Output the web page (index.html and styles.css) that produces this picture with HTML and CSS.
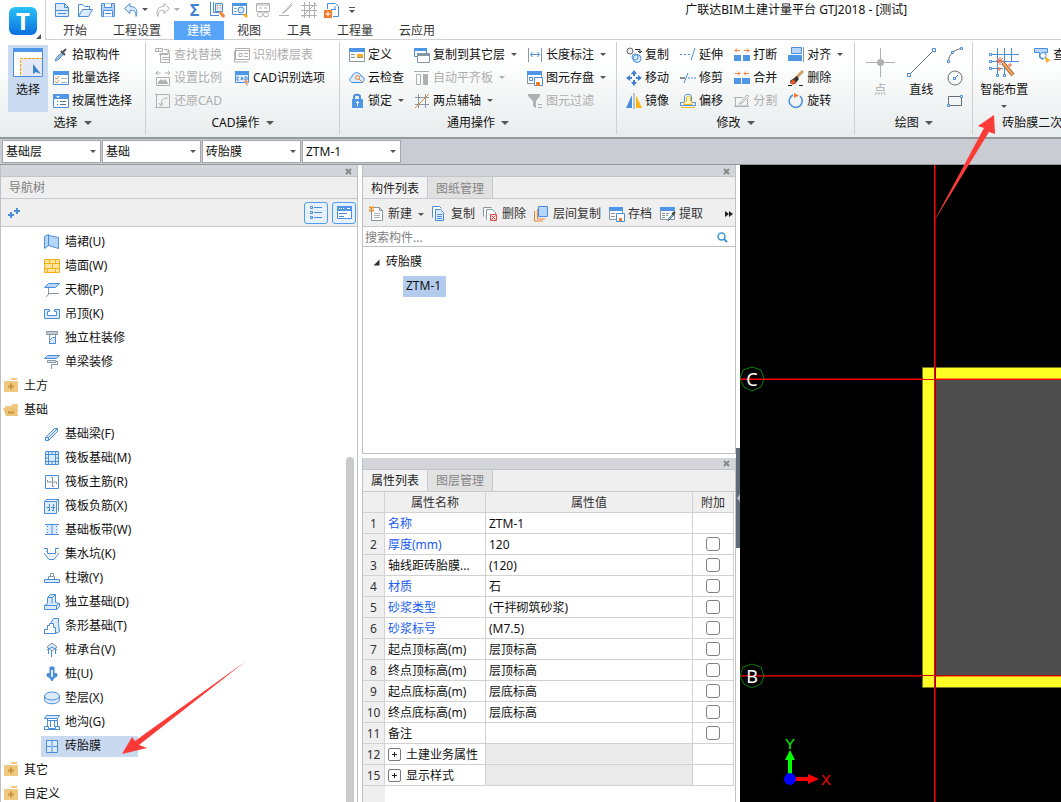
FILE: index.html
```html
<!DOCTYPE html>
<html lang="zh-CN">
<head>
<meta charset="utf-8">
<title>广联达BIM土建计量平台 GTJ2018 - [测试]</title>
<link rel="stylesheet" href="styles.css">
</head>
<body>
<div class="app">
<header class="top">
  <div class="logo">
    <span class="logo-tile">T</span>
    <svg class="logo-corner" width="5" height="5" viewBox="0 0 5 5"><path class="df" d="M5 0v5H0z"/></svg>
  </div>
  <div class="top-body">
    <div class="title-row">
      <div class="quick">
        <button aria-label="新建"><svg class="ic" viewBox="0 0 16 16"><path class="b lt" d="M1.500 1.500h9l4 4v9h-13z"/><path class="b" d="M10.500 1.500v4h4M1.500 8.500h13M4 11.500h8"/></svg></button>
        <button aria-label="打开"><svg class="ic" viewBox="0 0 16 16"><path class="b" d="M1.500 14.500v-12h4l2 2h5v3"/><path class="b lt" d="M1.500 14.500l4-7h10l-4 7z"/></svg></button>
        <button aria-label="保存"><svg class="ic" viewBox="0 0 16 16"><path class="b lt2" d="M1.500 1.500h13v13h-13z"/><path class="b wf" d="M4.500 1.500v4h7v-4M3.500 14.500v-6h9v6M5 11.500h6"/></svg></button>
        <button class="drop" aria-label="撤销"><svg class="ic" viewBox="0 0 16 16"><path class="b lt" d="M7 1.500L1.500 6.500 7 11.500V8.500c4-1 6 1 6 6 2-5 1-10-6-10z"/></svg><span class="caret"></span></button>
        <button class="drop off" aria-label="恢复"><svg class="ic" viewBox="0 0 16 16"><path class="g" d="M9 1.500L14.500 6.500 9 11.500V8.500c-4-1-6 1-6 6-2-5-1-10 6-10z"/></svg><span class="caret"></span></button>
        <button class="sigma" aria-label="汇总计算">Σ</button>
        <button aria-label="查看工程量"><svg class="ic" viewBox="0 0 16 16"><path class="b" d="M1.500 0v13.500M4.500 0v10M1 13.500h9M4 10.500h6"/><path class="b lt" d="M6.500 1.500h7v8h-7z"/><path class="r" d="M8 3.500h1M11 3.500h1M8 6h1M11 6h1"/><path class="o thick" d="M11 10l4 5"/></svg></button>
        <button aria-label="查看计算式"><svg class="ic" viewBox="0 0 16 16"><path class="b" d="M.5 1.500h14v11H.5z"/><path class="bf" d="M0 1h15v3H0z"/><circle class="b lt" cx="9" cy="8" r="3"/><path class="b" d="M2.500 6.500h2M2.500 9.500h2"/><path class="yf" d="M13 11l3 3-2 2-3-3z"/></svg></button>
        <button class="off" aria-label="云检查"><svg class="ic" viewBox="0 0 16 16"><path class="g" d="M1.500 1.500h13v8h-13zM1 3h14M4 6h3M9 6h3"/><circle class="g" cx="5" cy="12.500" r="2.500"/><circle class="g" cx="11" cy="12.500" r="2.500"/></svg></button>
        <button class="off" aria-label="编辑"><svg class="ic" viewBox="0 0 16 16"><path class="g" d="M14 1L7 9l-3 2 3-1 7-7M1 13.500h10"/></svg></button>
        <button class="off" aria-label="网格"><svg class="ic" viewBox="0 0 16 16"><path class="g" d="M3.500 0v16M8.500 0v16M13.500 0v16M0 3.500h16M0 8.500h16M0 13.500h16M1 15L15 1"/></svg></button>
        <button aria-label="导出"><svg class="ic" viewBox="0 0 16 16"><path class="b" d="M3.500 7V1.500h8l3 3v10H9"/><path class="b" d="M7 7.500h5M11 4v3"/><path class="of" d="M0 8h8v8H0z"/><path class="w" d="M1.500 12h5M4 9.500v5"/></svg></button>
        <button class="more" aria-label="自定义快速访问"><svg width="6" height="8" viewBox="0 0 6 8"><path class="df" d="M0 1h6v1H0zM0 4h6L3 7z"/></svg></button>
      </div>
      <h1 class="title">广联达BIM土建计量平台 GTJ2018 - [测试]</h1>
    </div>
    <nav class="tabs">
      <button>开始</button><button>工程设置</button><button class="on">建模</button><button>视图</button><button>工具</button><button>工程量</button><button>云应用</button>
    </nav>
  </div>
</header>

<section class="ribbon">
  <div class="group pick">
    <div class="tools">
      <button class="big picked"><svg width="30" height="30" viewBox="0 0 30 30"><path class="b wf" d="M.5 1.500h29v28H.5z"/><path class="bf" d="M0 1h30v4H0z"/><path d="M8 11h21v18H8z" fill="#e3e8f4"/><path class="dash" d="M7.500 28V11.500H29"/><path d="M20 17v10l3-2 5 2z" fill="#3b82cc"/></svg>选择</button>
      <div class="col">
        <button><svg class="ic" viewBox="0 0 16 16"><path d="M2 14l1-3 6-6 2 2-6 6z" fill="#8fbdf0" stroke="#7896b5"/><path d="M8 4l4 4M10 5l3-3" stroke="#555" stroke-width="2"/></svg>拾取构件</button>
        <button><svg class="ic" viewBox="0 0 16 16"><path class="b wf" d="M.5 1.500h15v13H.5z"/><path class="bf" d="M0 1h16v4H0z"/><path class="o" d="M2 7.500l2 1.500 2-3M2 11.500l2 1.500 2-3"/><path class="g" d="M8 8.500h6M8 12.500h6"/></svg>批量选择</button>
        <button><svg class="ic" viewBox="0 0 16 16"><path class="b wf" d="M.5 1.500h15v13H.5z"/><path class="bf" d="M0 1h16v5H0z"/><path d="M3 3h4L5 5z" fill="#fff"/><path class="d" d="M4 8.500h1M7 8.500h6M4 11.500h1M7 11.500h6"/></svg>按属性选择</button>
      </div>
    </div>
    <button class="label">选择<span class="caret"></span></button>
  </div>

  <div class="group cad">
    <div class="tools">
      <div class="col">
        <button class="off"><svg class="ic" viewBox="0 0 16 16"><path class="g" d="M.5 1.500h7v3h-7zM3.500 1v3M9 2.500h4.500V5M11.500 3.500l2 2 2-2M5.500 6.500h9v9h-9z"/><path class="g" d="M4 7.500h9M7 10.500h7M7 12.500h7"/></svg>查找替换</button>
        <button class="off"><svg class="ic" viewBox="0 0 16 16"><path class="g" d="M.5 3h5M10 3h5M3 1L1 3l2 2M13 1l2 2-2 2M1.500 7.500h13v8h-13z"/><path class="gf" d="M3 14v-2l3-3 2 2 2-2 3 4v1z"/></svg>设置比例</button>
        <button class="off"><svg class="ic" viewBox="0 0 16 16"><path class="g" d="M1.500 1v14M0 1.500h14.500v13H0M4 10l2 3 2-3M6.500 12c-1-5 2-7 6-7"/></svg>还原CAD</button>
      </div>
      <div class="col">
        <button class="off"><svg class="ic" viewBox="0 0 16 16"><path class="g" d="M1.500 1.500h14v11h-14zM.5 4v11h14M1 3.500h14M5 6.500h3v3H5zM10 6.500h4M10 9.500h4"/></svg>识别楼层表</button>
        <button><svg class="ic" viewBox="0 0 16 16"><path class="b lt" d="M1.500 1.500h13v11h-13z"/><path class="bf" d="M1 1h14v4H1z"/><path class="b" d="M5 7H3v3h2M7 10l1-3 1 3M11 7v3h2V7z"/><path d="M10 9l5 3-2 1 1 3-2-1z" fill="#f29a68"/></svg>CAD识别选项</button>
      </div>
    </div>
    <button class="label">CAD操作<span class="caret"></span></button>
  </div>

  <div class="group common">
    <div class="tools">
      <div class="col">
        <button><svg class="ic" viewBox="0 0 16 16"><path class="s wf" d="M.5 1.500h15v13H.5z"/><path class="bf" d="M0 1h16v4H0z"/><path class="s" d="M2 7.500h4M2 10.500h4M8 10.500h6"/><path class="yf" d="M8 7h6v3H8z"/></svg>定义</button>
        <button><svg class="ic" viewBox="0 0 16 16"><path class="b lt" d="M4 12.500C0 12.500 0 7.500 3 7c0-5 8-6 9-1 4 0 4 6 1 6.500z"/><circle class="o" cx="8.500" cy="7.500" r="2"/><path class="o" d="M10 9l3 3"/></svg>云检查</button>
        <button><svg class="ic" viewBox="0 0 16 16"><path d="M5 7V4c0-3 6-3 6 0v3" fill="none" stroke="#4a8edb" stroke-width="2"/><path class="bf" d="M3 6h11v9H3z"/><path class="w" d="M8.500 8v5M7 9.500h3"/></svg>锁定<span class="caret"></span></button>
      </div>
      <div class="col">
        <button><svg class="ic" viewBox="0 0 16 16"><path class="b wf" d="M.5 1.500h12v8H.5z"/><path class="bf" d="M0 1h13v3H0z"/><path class="s wf" d="M3.500 6.500h12v9h-12z"/><path class="sf" d="M3 6h13v3H3z"/></svg>复制到其它层<span class="caret"></span></button>
        <button class="off"><svg class="ic" viewBox="0 0 16 16"><path class="g" d="M0 1.500h15M2.500 4.500h4v10h-4z"/><path class="gf" d="M9 4h5v11H9z"/></svg>自动平齐板<span class="caret"></span></button>
        <button><svg class="ic" viewBox="0 0 16 16"><path class="s" d="M4.500 1v14M11.500 1v14M1 4.500h14M1 11.500h14"/><path class="o" d="M1 15L15 1"/></svg>两点辅轴<span class="caret"></span></button>
      </div>
      <div class="col">
        <button><svg class="ic" viewBox="0 0 16 16"><path class="s" d="M1.500 1v14M14.500 1v14"/><path class="b" d="M4 7.500h8M5.500 5L3.500 7.500l2 2.500M10.500 5l2 2.500-2 2.500"/></svg>长度标注<span class="caret"></span></button>
        <button><svg class="ic" viewBox="0 0 16 16"><path class="s wf" d="M.5 1.500h14v12H.5z"/><path class="bf" d="M0 1h15v4H0z"/><path class="b" d="M2.500 7.500h3v3h-3z"/><path class="b wf" d="M7.500 7.500h8v8h-8z"/><path class="of" d="M9 12h4v4H9z"/></svg>图元存盘<span class="caret"></span></button>
        <button class="off"><svg class="ic" viewBox="0 0 16 16"><path class="gf" d="M1 1h12v2L9 8v7l-3-2V8L1 3zM11 11h4v1h-4zM11 14h4v1h-4z"/></svg>图元过滤</button>
      </div>
    </div>
    <button class="label">通用操作<span class="caret"></span></button>
  </div>

  <div class="group modify">
    <div class="tools">
      <div class="col">
        <button><svg class="ic" viewBox="0 0 16 16"><circle cx="4" cy="4" r="3" fill="#eee" stroke="#666"/><circle class="b lt" cx="11" cy="11.500" r="4"/><circle class="b" cx="9" cy="10" r="3"/><path class="k" d="M9 2.500h5V6M12 4l2 2 2-2"/></svg>复制</button>
        <button><svg class="ic" viewBox="0 0 16 16"><path d="M8 0l3 4H9v2H7V4H5zM8 16l3-4H9v-2H7v2H5zM0 8l4-3v2h2v2H4v2zM16 8l-4-3v2h-2v2h2v2z" fill="#3f80d0"/></svg>移动</button>
        <button><svg class="ic" viewBox="0 0 16 16"><path d="M6 2v13H0z" fill="#4a8edb"/><path d="M10 2v13h6z" fill="#fcb814"/><path class="s" d="M8 0v16"/></svg>镜像</button>
      </div>
      <div class="col">
        <button><svg class="ic" viewBox="0 0 16 16"><path class="b" d="M0 7.500h2M4 7.500h2M8 7.500h2M11 13l4-12"/></svg>延伸</button>
        <button><svg class="ic" viewBox="0 0 16 16"><path class="k" d="M0 8h5"/><path class="b" d="M4 13l4-10M8 8h2M11 8h2M14 8h2"/></svg>修剪</button>
        <button><svg class="ic" viewBox="0 0 16 16"><path class="b" d="M.5 12.500v-3h4v-6c0-3 7-3 7 0v6h4v3z"/><path d="M1 14.500h14M4 11.500h8V9l-1.500-1V4c0-1-4-1-4 0v4L4 9z" fill="#fff3c0" stroke="#f5b81c"/></svg>偏移</button>
      </div>
      <div class="col">
        <button><svg class="ic" viewBox="0 0 16 16"><path class="bf" d="M0 8h7v6H0zM9 8h7v6H9z"/><path class="o" d="M1 3.500h5M3 1.500L1 3.500l2 2M10 3.500h5M13 1.500l2 2-2 2"/></svg>打断</button>
        <button><svg class="ic" viewBox="0 0 16 16"><path class="bf" d="M0 8h7v6H0zM8 8h8v6H8z"/><path class="o" d="M1 3.500h5M4 1.500l2 2-2 2M10 3.500h5M12 1.500l-2 2 2 2"/></svg>合并</button>
        <button class="off"><svg class="ic" viewBox="0 0 16 16"><path class="g" d="M0 4.500h9M1.500 4v9h12V6M0 13.500h15M5 11l8-9 2 1-8 8z"/></svg>分割</button>
      </div>
      <div class="col">
        <button><svg class="ic" viewBox="0 0 16 16"><path class="b lt2" d="M3.500.5h10v6h-10z"/><path class="bf" d="M0 8h14v6H0z"/><path class="s" d="M15.500 0v15"/></svg>对齐<span class="caret"></span></button>
        <button><svg class="ic" viewBox="0 0 16 16"><path d="M15 1L8 8" stroke="#c9a066" stroke-width="3"/><path d="M9 6l2 3-4 5H3l-1-3z" fill="#333"/><path d="M5 9l3 3-3 3-3-2z" fill="#e5562d"/><path class="k" d="M0 15.500h4M11 15.500h4"/></svg>删除</button>
        <button><svg class="ic" viewBox="0 0 16 16"><path d="M12 3a6.500 6.500 0 1 1-7-1" fill="none" stroke="#4a8edb" stroke-width="1.500"/><path class="of" d="M6 0l5 2.500L6 5z"/></svg>旋转</button>
      </div>
    </div>
    <button class="label">修改<span class="caret"></span></button>
  </div>

  <div class="group draw">
    <div class="tools">
      <button class="big off"><svg width="30" height="30" viewBox="0 0 30 30"><path class="g" d="M15.500 1v11M15.500 19v11M1 15.500h11M19 15.500h11"/><circle class="gf" cx="15.500" cy="15.500" r="3.500"/></svg>点</button>
      <button class="big"><svg width="30" height="30" viewBox="0 0 30 30"><path class="d" d="M4 27L26 5"/><path class="b wf" d="M1.500 26.500h3v3h-3zM26.500 1.500h3v3h-3z"/></svg>直线</button>
      <div class="col">
        <button aria-label="弧"><svg class="ic" viewBox="0 0 16 16"><path class="d" d="M1.500 14C2 7 7 3 14 1.500"/><path class="b wf" d="M.5 13.500h2v2h-2zM13.500.5h2v2h-2zM4.500 4.500h2v2h-2z"/></svg></button>
        <button aria-label="圆"><svg class="ic" viewBox="0 0 16 16"><circle class="d" cx="8" cy="8" r="7"/><path class="b" d="M8 8l3-3M6.500 7.500h2v2h-2z"/></svg></button>
        <button aria-label="矩形"><svg class="ic" viewBox="0 0 16 16"><path class="d" d="M1.500 3.500h13v9h-13z"/><path class="b wf" d="M.5 11.500h2v2h-2zM13.500 2.500h2v2h-2z"/></svg></button>
      </div>
    </div>
    <button class="label">绘图<span class="caret"></span></button>
  </div>

  <div class="group smart">
    <div class="tools">
      <button class="big"><svg width="30" height="30" viewBox="0 0 30 30"><path class="b" d="M8.500 1v26M15.500 1v26M22.500 1v14M2 7.500h28M2 14.500h28M2 21.500h12"/><path class="b wf" d="M.5 6.500h2v2h-2zM.5 13.500h2v2h-2zM.5 20.500h2v2h-2zM7.500 27.500h2v2h-2zM14.500 27.500h2v2h-2z"/><path d="M14 16l10 12" stroke="#9a6038" stroke-width="4"/><path d="M14 16l10 12" stroke="#fba95d" stroke-width="2"/><path class="r" d="M11 10v8M7 14h8M8 11l6 6M14 11l-6 6M19 18h4M21 16v4M8 22h4M10 20v4"/></svg>智能布置<span class="caret"></span></button>
      <div class="col">
        <button><svg class="ic" viewBox="0 0 16 16"><path class="b lt2" d="M.5 1.500h13v4h-3l-2 3v4l-3-2v-5h-5z"/><circle class="b wf" cx="9" cy="8.500" r="3"/><path class="yf" d="M12 10l4 3-3 3-2-4z"/></svg>查</button>
      </div>
    </div>
    <button class="label">砖胎膜二次</button>
  </div>
</section>

<div class="pickers">
  <label><select aria-label="楼层"><option>基础层</option></select><span class="caret"></span></label>
  <label><select aria-label="构件类别"><option>基础</option></select><span class="caret"></span></label>
  <label><select aria-label="构件类型"><option>砖胎膜</option></select><span class="caret"></span></label>
  <label><select aria-label="构件名称"><option>ZTM-1</option></select><span class="caret"></span></label>
</div>

<main class="work">
  <aside class="panel nav">
    <div class="bar"><button aria-label="关闭"><svg width="7" height="7" viewBox="0 0 7 7"><path class="x" d="M1 1l5 5M6 1L1 6"/></svg></button></div>
    <h2 class="nav-title">导航树</h2>
    <div class="nav-tools">
      <button aria-label="展开"><svg width="13" height="12" viewBox="0 0 13 12"><path d="M0 8h6M3 5v6M6 4h6M9 1v6" stroke="#4a8edb" stroke-width="2"/></svg></button>
      <span class="grow"></span>
      <button class="view" aria-label="列表"><svg width="14" height="14" viewBox="0 0 14 14"><path class="b" d="M1.500.5h2v2h-2zM1.500 5.500h2v2h-2zM1.500 10.500h2v2h-2zM5 1.500h8M5 6.500h8M5 11.500h8"/></svg></button>
      <button class="view" aria-label="窗口"><svg width="16" height="14" viewBox="0 0 16 14"><path class="b wf" d="M1.500.5h14v12h-14z"/><path class="bf" d="M1 0h15v5H1z"/><path class="w" d="M3 2.500h1M5 2.500h1M7 2.500h1M11 2.500h3"/><path class="b" d="M3 7.500h8M3 10.500h5"/></svg></button>
    </div>
    <div class="nav-body">
    <ul class="tree">
      <li class="leaf"><svg class="ic" viewBox="0 0 16 16"><path class="b lt2" d="M.5 2.500l4-2v11l-4 3zM4.500 1.500l10 2v11l-10-3z"/></svg>墙裙(U)</li>
      <li class="leaf"><svg class="ic" viewBox="0 0 16 16"><path d="M.5 1.500h15v13H.5zM0 5.500h16M0 10.500h16M5.500 1v4M11.500 1v4M8.500 5v5M3.500 10v5M11.500 10v5" fill="#ffe5a0" stroke="#f5b016"/></svg>墙面(W)</li>
      <li class="leaf"><svg class="ic" viewBox="0 0 16 16"><path class="s" d="M4.500 5v8M2 15l3-3.500h10"/><path class="b lt2" d="M.5 5.500l4-4h11l-4 4z"/></svg>天棚(P)</li>
      <li class="leaf"><svg class="ic" viewBox="0 0 16 16"><path class="b lt" d="M.5 3.500h5v2h-2v4h9v-4h-2v-2h5v9H.5z"/></svg>吊顶(K)</li>
      <li class="leaf"><svg class="ic" viewBox="0 0 16 16"><path d="M2.500 1.500h11v3h-11z" fill="#c3c9ce" stroke="#8796a3"/><path class="s" d="M5.500 5v9M11.500 5v9"/><path class="b lt" d="M5.500 13.500v-3l3-3h3v6z"/></svg>独立柱装修</li>
      <li class="leaf"><svg class="ic" viewBox="0 0 16 16"><path class="b lt2" d="M.5 4.500l3-3h12l-3 3z"/><path class="s lt" d="M3.500 6.500h8v2h-8z"/><path class="s" d="M12 7.500h1.500v3H7.500V15"/></svg>单梁装修</li>
      <li class="branch"><svg class="ic" viewBox="0 0 16 16"><path class="ff" d="M8 1l1-1h5v2H8zM1 3h14v11H1z"/><path class="fm" d="M5 8.500h6M8 5.500v6"/></svg>土方</li>
      <li class="branch"><svg class="ic" viewBox="0 0 16 16"><path class="ff" d="M2 4h6l1-2h6v8H2z"/><path d="M0 6h13l2 8H3z" fill="#ecc274"/><path class="fm" d="M5 10.500h6"/></svg>基础</li>
      <li class="leaf"><svg class="ic" viewBox="0 0 16 16"><path class="b lt" d="M1.500 11.500l9-9h3v3l-9 9h-3z"/><path class="b" d="M1.500 11.500h3v3M4.500 11.500l9-9"/></svg>基础梁(F)</li>
      <li class="leaf"><svg class="ic" viewBox="0 0 16 16"><path class="b lt" d="M1.500 1.500h13v13h-13z"/><path class="b" d="M4.500 4.500h7v7h-7zM4.500 1v14M11.500 1v14M1 4.500h14M1 11.500h14M8 1v3M8 12v3M1 8h3M12 8h3"/></svg>筏板基础(M)</li>
      <li class="leaf"><svg class="ic" viewBox="0 0 16 16"><path class="b" d="M1.500 1.500h13v13h-13z"/><path class="s" d="M3.500 6v2h9v2M7 3.500h1.500v9H10"/></svg>筏板主筋(R)</li>
      <li class="leaf"><svg class="ic" viewBox="0 0 16 16"><path class="b lt" d="M.5 3.500h12v12H.5z"/><path class="b" d="M2.500 1.500h12v12M.5 3.500l2-2M12.500 3.500l2-2M5.500 6v7M9.500 6v7M2.500 9.500h3M7 9.500h4M4 12.500h2M8 12.500h2"/></svg>筏板负筋(X)</li>
      <li class="leaf"><svg class="ic" viewBox="0 0 16 16"><path class="lt" d="M2 3h12v10H2z"/><path class="b" d="M1 2.500h14M1 12.500h14M8 3v10"/><path class="b dots" d="M3.500 4v8M12.500 4v8"/></svg>基础板带(W)</li>
      <li class="leaf"><svg class="ic" viewBox="0 0 16 16"><path class="b" d="M0 2.500h3.500v5h8v-5H15M0 7l5 6.500h5L15 7"/><path class="s dots" d="M2 5l4 5h4l4-5"/></svg>集水坑(K)</li>
      <li class="leaf"><svg class="ic" viewBox="0 0 16 16"><path class="b lt" d="M.5 9.500h15v3H.5z"/><path class="s" d="M4.500 9V6.500h6V9M6.500 6V3.500h3V6"/></svg>柱墩(Y)</li>
      <li class="leaf"><svg class="ic" viewBox="0 0 16 16"><path class="b lt" d="M.5 11.500l3-2v-6l3-3h5v8l4 1v3l-3 3H.5z"/><path class="b" d="M4 3.500h4v6M8.500 3.500l3-3M.5 11.500h12l3-2M12.500 11.500v4"/></svg>独立基础(D)</li>
      <li class="leaf"><svg class="ic" viewBox="0 0 16 16"><path class="b lt" d="M.5 15.500v-4h3v-4h2l4-7h5v5l1 8-4 2z"/><path class="b wf" d="M.5 15.500v-4h3v-4h2v-2h4v4h2v6z"/></svg>条形基础(T)</li>
      <li class="leaf"><svg class="ic" viewBox="0 0 16 16"><path class="s lt" d="M3 5l5-4 5 4-5 4z"/><path class="b" d="M4.500 6v6M7.500 9v6M11.500 6v6M3 8l5-3 5 3"/></svg>桩承台(V)</li>
      <li class="leaf"><svg class="ic" viewBox="0 0 16 16"><path d="M6 1h4v6l3 1v2l-3 2-2 3-2-3-3-2V8l3-1z" fill="#4a8edb" stroke="#4a8edb"/><path class="lt" d="M7 4h2v7H7z"/></svg>桩(U)</li>
      <li class="leaf"><svg class="ic" viewBox="0 0 16 16"><path class="b lt" d="M.5 6v4c1 5 14 5 15 0V6"/><ellipse class="b lt" cx="8" cy="6" rx="7.500" ry="4"/></svg>垫层(X)</li>
      <li class="leaf"><svg class="ic" viewBox="0 0 16 16"><path class="b lt" d="M.5 4.500l2-3h13l-2 3z"/><path class="b" d="M3.500 5v8M6.500 7v6M10.500 7v6M13.500 5v8M4 6.500h9M.5 12.500h4v2h7v-2h4v3H.5z"/></svg>地沟(G)</li>
      <li class="leaf"><span class="sel"><svg class="ic" viewBox="0 0 16 16"><path class="b lt" d="M2.500 2.500h11v12h-11z"/><path class="b" d="M8 2v13M2 8.500h5M9 8.500h5"/></svg>砖胎膜</span></li>
      <li class="branch"><svg class="ic" viewBox="0 0 16 16"><path class="ff" d="M8 1l1-1h5v2H8zM1 3h14v11H1z"/><path class="fm" d="M5 8.500h6M8 5.500v6"/></svg>其它</li>
      <li class="branch"><svg class="ic" viewBox="0 0 16 16"><path class="ff" d="M8 1l1-1h5v2H8zM1 3h14v11H1z"/><path class="fm" d="M5 8.500h6M8 5.500v6"/></svg>自定义</li>
    </ul>
    <div class="scroll"><div class="thumb"></div></div>
    </div>
  </aside>

  <div class="mid">
    <section class="panel parts">
      <div class="bar"><button aria-label="关闭"><svg width="7" height="7" viewBox="0 0 7 7"><path class="x" d="M1 1l5 5M6 1L1 6"/></svg></button></div>
      <div class="ptabs"><button class="on">构件列表</button><button>图纸管理</button></div>
      <div class="ptools">
        <button><svg class="ic" viewBox="0 0 16 16"><path class="s wf" d="M2.500 1.500h8l3 3v10h-11z"/><path class="s" d="M10.500 1.500v3h3"/><path class="g" d="M5 7.500h6M5 9.500h6M5 11.500h6"/><path d="M0 1.500h5M0 4.500h5M1 0v6M4 0v6" stroke="#f7941d"/></svg>新建<span class="caret"></span></button>
        <button><svg class="ic" viewBox="0 0 16 16"><path class="b wf" d="M.5 11.500V.5h7l2 2"/><path class="b lt" d="M3.500 3.500h5l3 3v8h-8z"/><path class="b" d="M5 8.500h5M5 10.500h5M5 12.500h5"/></svg>复制</button>
        <button><svg class="ic" viewBox="0 0 16 16"><path class="s wf" d="M.5 10.500v-9h8M3.500 13.500v-10h6l3 3v2"/><path d="M7.500 8.500h6v6h-6zM8.500 9.500l4 4M12.500 9.500l-4 4" fill="#fbdada" stroke="#d9534f"/></svg>删除</button>
        <button><svg class="ic" viewBox="0 0 16 16"><path class="o" d="M.5 5v10H9M3.500 3v10H11"/><path class="b lt2" d="M4.500.5h9v10h-9z"/></svg>层间复制</button>
        <button><svg class="ic" viewBox="0 0 16 16"><path class="s wf" d="M.5 1.500h13v12H.5z"/><path class="bf" d="M0 1h14v4H0z"/><path class="s" d="M2 7.500h4M2 10.500h4"/><path class="b wf" d="M7.500 7.500h8v8h-8z"/><path class="of" d="M10 12h3v3h-3z"/></svg>存档</button>
        <button><svg class="ic" viewBox="0 0 16 16"><path class="s wf" d="M.5 2.500h14v11H.5z"/><path class="bf" d="M0 1h15v4H0z"/><path class="s" d="M2 7.500h3M6 7.500h3M2 9.500h3M6 9.500h2M2 11.500h3"/><path d="M8 15l1-3 4-4 1 1-4 4z" fill="#8fd0f0" stroke="#56809c"/><path d="M12 7l2 2M13 8l2-2" stroke="#444" stroke-width="2"/></svg>提取</button>
        <span class="grow"></span>
        <button aria-label="更多"><svg width="8" height="6" viewBox="0 0 8 6"><path d="M0 0l4 3-4 3zM4 0l4 3-4 3z" fill="#222"/></svg></button>
      </div>
      <div class="search"><input type="text" aria-label="搜索构件" placeholder="搜索构件..."><svg width="11" height="11" viewBox="0 0 11 11"><circle cx="4.500" cy="4.500" r="3.500" fill="none" stroke="#3d97d3" stroke-width="1.500"/><path d="M7 7l3 3" stroke="#3d97d3" stroke-width="2"/></svg></div>
      <ul class="ptree">
        <li><svg width="7" height="7" viewBox="0 0 7 7"><path d="M6.500.5v6h-6z" fill="#333"/></svg>砖胎膜</li>
        <li class="child"><span>ZTM-1</span></li>
      </ul>
    </section>

    <section class="panel props">
      <div class="bar"><button aria-label="关闭"><svg width="7" height="7" viewBox="0 0 7 7"><path class="x" d="M1 1l5 5M6 1L1 6"/></svg></button></div>
      <div class="ptabs"><button class="on">属性列表</button><button>图层管理</button></div>
      <div class="sheet">
      <table>
        <colgroup><col class="c-no"><col class="c-name"><col><col class="c-add"></colgroup>
        <thead><tr><th></th><th>属性名称</th><th>属性值</th><th>附加</th></tr></thead>
        <tbody>
          <tr><th>1</th><td class="key">名称</td><td>ZTM-1</td><td></td></tr>
          <tr><th>2</th><td class="key">厚度(mm)</td><td>120</td><td class="tick"><input type="checkbox" aria-label="附加 厚度"></td></tr>
          <tr><th>3</th><td>轴线距砖胎膜...</td><td>(120)</td><td class="tick"><input type="checkbox" aria-label="附加 轴线距"></td></tr>
          <tr><th>4</th><td class="key">材质</td><td>石</td><td class="tick"><input type="checkbox" aria-label="附加 材质"></td></tr>
          <tr><th>5</th><td class="key">砂浆类型</td><td>(干拌砌筑砂浆)</td><td class="tick"><input type="checkbox" aria-label="附加 砂浆类型"></td></tr>
          <tr><th>6</th><td class="key">砂浆标号</td><td>(M7.5)</td><td class="tick"><input type="checkbox" aria-label="附加 砂浆标号"></td></tr>
          <tr><th>7</th><td>起点顶标高(m)</td><td>层顶标高</td><td class="tick"><input type="checkbox" aria-label="附加 起点顶标高"></td></tr>
          <tr><th>8</th><td>终点顶标高(m)</td><td>层顶标高</td><td class="tick"><input type="checkbox" aria-label="附加 终点顶标高"></td></tr>
          <tr><th>9</th><td>起点底标高(m)</td><td>层底标高</td><td class="tick"><input type="checkbox" aria-label="附加 起点底标高"></td></tr>
          <tr><th>10</th><td>终点底标高(m)</td><td>层底标高</td><td class="tick"><input type="checkbox" aria-label="附加 终点底标高"></td></tr>
          <tr><th>11</th><td>备注</td><td></td><td class="tick"><input type="checkbox" aria-label="附加 备注"></td></tr>
          <tr><th>12</th><td><button class="fold"><svg width="13" height="13" viewBox="0 0 13 13"><rect class="box" x=".5" y=".5" width="12" height="12" rx="1.500"/><path class="k" d="M4 6.500h5M6.500 4v5"/></svg>土建业务属性</button></td><td class="dim"></td><td></td></tr>
          <tr><th>15</th><td><button class="fold"><svg width="13" height="13" viewBox="0 0 13 13"><rect class="box" x=".5" y=".5" width="12" height="12" rx="1.500"/><path class="k" d="M4 6.500h5M6.500 4v5"/></svg>显示样式</button></td><td class="dim"></td><td></td></tr>
        </tbody>
      </table>
      <div class="gutter"></div>
      </div>
    </section>
  </div>

  <div class="split"><button aria-label="收起"><svg width="3" height="8" viewBox="0 0 3 8"><path d="M3 0v8L0 4z" fill="#b8bec4"/></svg></button></div>

  <div class="canvas">
    <svg width="100%" height="100%">
      <g transform="translate(-740 -165)">
        <path d="M922.500 367.500h2000v320h-2000z" fill="#ffff26" stroke="#77771c"/>
        <path d="M936 380h2000v295H936z" fill="#4e4e4e"/>
        <path d="M740 378.500h183" stroke="#800000"/>
        <path d="M936 378.500h2000" stroke="#ff8c1a"/>
        <path d="M740 379.500h2200" stroke="#f00"/>
        <path d="M740 675.500h2200" stroke="#c80000"/>
        <path d="M740 676.500h183" stroke="#800000"/>
        <path d="M936 676.500h2000" stroke="#ff8c1a"/>
        <path d="M934.500 165v2000" stroke="#f00"/>
        <path d="M935.500 165v2000" stroke="#800000"/>
        <g class="axis">
          <path d="M752 367l9 3 3 9-3 8-9 4-8-4-4-8 3-9z"/><text x="752" y="386">C</text>
          <path d="M752 664l9 3 3 9-3 8-9 4-8-4-4-8 3-9z"/><text x="752" y="683">B</text>
        </g>
        <path d="M788 775v-15h-3l5-10 5 10h-3v15z" fill="#0f0"/>
        <path d="M795 777h13v-3l11 5-11 5v-3h-13z" fill="#f00"/>
        <circle cx="790" cy="779" r="6" fill="#00f"/>
        <text class="dir" x="790" y="749" fill="#0f0">Y</text>
        <text class="dir" x="826" y="785" fill="#f00">X</text>
      </g>
    </svg>
  </div>
</main>

<svg class="notes" width="1061" height="802" viewBox="0 0 1061 802">
  <path d="M994 115l-16 11 6 2-51 95 56-91 6 2z"/>
  <path d="M122 754l10-17 3 4 111-80-107 84 8 3z"/>
</svg>
</div>
</body>
</html>
```

FILE: styles.css
```css
* { box-sizing: border-box; }
body, h1, h2, ul { margin: 0; padding: 0; }
ul { list-style: none; }
body, button, select, input {
  font: 12px/16px "Noto Sans", "Noto Sans CJK SC", sans-serif;
  color: #111;
}
body { background: #fff; }
button {
  display: flex;
  align-items: center;
  border: 0;
  padding: 0;
  background: none;
  white-space: nowrap;
}
svg { display: block; flex: none; }
.app {
  position: relative;
  display: flex;
  flex-direction: column;
  height: 100vh;
  overflow: hidden;
}
.grow { flex: 1; }
.ic { width: 16px; height: 16px; }

/* icon strokes and fills */
.b, .g, .s, .d, .k, .o, .r, .w, .x, .fm { fill: none; }
.b { stroke: #4a8edb; }
.g { stroke: #b0b0b0; }
.s { stroke: #8796a3; }
.d { stroke: #667079; }
.k { stroke: #222; }
.o { stroke: #ee8236; }
.r { stroke: #ef6a42; }
.w { stroke: #fff; }
.x { stroke: #888; stroke-width: 2; }
.thick { stroke-width: 3; }
.bf { fill: #4f96e6; }
.gf { fill: #b0b0b0; }
.sf { fill: #8796a3; }
.df { fill: #555; }
.of { fill: #ee7a2c; }
.yf { fill: #fbab18; }
.wf { fill: #fff; }
.lt { fill: #dcebfb; }
.lt2 { fill: #b5d5fa; }
.ff { fill: #efc981; }
.fm { stroke: #c8963c; stroke-width: 2; }
.dash { fill: none; stroke: #f7a600; stroke-dasharray: 3 1; }
.dots { stroke-dasharray: 1 2; }
.box { fill: #fff; stroke: #777; }

.caret {
  flex: none;
  width: 0;
  height: 0;
  border: 3px solid transparent;
  border-top: 3px solid #555;
  border-bottom: 0;
}
.off { color: #adadad; }
.off .caret { border-top-color: #b0b0b0; }

/* title and menu */
.top { display: flex; flex: none; height: 40px; }
.logo {
  position: relative;
  width: 46px;
  padding: 7px 9px;
  border-right: 1px solid #d0d0d0;
}
.logo-tile {
  display: block;
  width: 28px;
  height: 28px;
  border-radius: 6px;
  background: linear-gradient(#27c3f7, #0c6fe0);
  color: #fff;
  font-size: 24px;
  font-weight: 700;
  line-height: 28px;
  text-align: center;
}
.logo-corner { position: absolute; right: 4px; bottom: 1px; }
.top-body { flex: 1; min-width: 0; border-bottom: 1px solid #d0d0d0; }
.title-row { display: flex; height: 21px; }
.quick { display: flex; align-items: center; gap: 7px; height: 19px; padding-left: 8px; }
.quick .drop { gap: 3px; }
.quick .sigma {
  padding: 0 3px;
  color: #3f83d4;
  font-size: 16px;
  font-weight: 700;
}
.quick .more { padding-left: 2px; }
.title {
  flex: 1;
  padding-left: 330px;
  font-size: 12px;
  font-weight: 400;
  line-height: 20px;
  white-space: nowrap;
}
.tabs { display: flex; padding-left: 4px; }
.tabs button { height: 19px; padding: 0 13px; color: #333; }
.tabs .on { background: #57a4f8; color: #fff; }

/* ribbon */
.ribbon {
  display: flex;
  flex: none;
  height: 99px;
  overflow: hidden;
  border-bottom: 2px solid #94999c;
  background: linear-gradient(#fff 20%, #e7ecec);
}
.group {
  display: flex;
  flex: none;
  flex-direction: column;
  margin: 2px 0 3px;
  padding-top: 1px;
  border-right: 1px solid #ccd0d2;
}
.tools { display: flex; height: 71px; }
.col { display: flex; flex-direction: column; }
.col button { height: 23px; gap: 3px; }
.col .caret { margin-left: 3px; }
.label { height: 23px; justify-content: center; gap: 6px; }
.label .caret { border-width: 4px 4px 0; }
.big { flex-direction: column; gap: 5px; padding-top: 4px; }
.big .caret { margin-top: 2px; }
.picked { width: 40px; height: 67px; margin-top: 2px; padding-top: 2px; background: #c9daf1; }
.pick .tools { gap: 5px; padding: 0 13px 0 8px; }
.cad .tools { gap: 12px; padding: 0 14px 0 9px; }
.common .tools { gap: 10px; padding: 0 10px 0 9px; }
.modify .tools { gap: 11px; padding: 0 11px 0 9px; }
.draw .tools { gap: 11px; padding: 0 9px 0 10px; }
.smart .tools { gap: 6px; padding: 0 7px; }
.smart { flex: 1; border: 0; }
.smart .label { justify-content: flex-start; padding-left: 29px; }

/* element pickers */
.pickers {
  display: flex;
  flex: none;
  gap: 1px;
  height: 26px;
  padding: 1px 2px;
  border-bottom: 1px solid #9498a0;
  background: #c9ccd2;
}
.pickers label { position: relative; flex: 0 0 99px; }
.pickers select {
  appearance: none;
  width: 100%;
  height: 23px;
  padding: 0 3px;
  border: 1px solid #a5a7aa;
  border-radius: 0;
  background: #fff;
}
.pickers .caret { position: absolute; right: 5px; top: 10px; pointer-events: none; }

/* docked panels */
.work { display: flex; flex: 1; min-height: 0; }
.panel {
  display: flex;
  flex-direction: column;
  min-height: 0;
  border: 1px solid #bfc1c7;
  border-top: 0;
  background: #fff;
  overflow: hidden;
}
.bar {
  display: flex;
  flex: none;
  align-items: center;
  justify-content: flex-end;
  height: 12px;
  padding: 1px 5px 0 0;
  border-bottom: 1px solid #c3c4cb;
  background: #d4d5db;
}
.nav { flex: none; width: 358px; border-bottom: 0; }
.nav-title {
  flex: none;
  height: 22px;
  padding-left: 8px;
  border-bottom: 1px solid #c8c9cf;
  background: #efefef;
  color: #7c7c7c;
  font-size: 12px;
  font-weight: 400;
  line-height: 22px;
}
.nav-tools {
  display: flex;
  flex: none;
  align-items: center;
  gap: 4px;
  height: 28px;
  padding: 0 1px 0 7px;
  border-bottom: 1px solid #c8c9cf;
  background: #efefef;
}
.view {
  justify-content: center;
  width: 24px;
  height: 22px;
  border: 1px solid #4f9cf0;
  border-radius: 3px;
  background: #e6f1fd;
}
.nav-body { display: flex; flex: 1; min-height: 0; }
.tree { flex: 1; padding-top: 3px; }
.tree li, .tree .sel { display: flex; align-items: center; gap: 5px; }
.tree li { height: 24px; }
.leaf { padding-left: 43px; }
.branch { padding-left: 2px; }
.leaf .sel {
  width: 97px;
  height: 21px;
  margin-left: -3px;
  padding-left: 3px;
  background: #c9d9f0;
}
.scroll { display: flex; flex-direction: column; justify-content: flex-end; padding-right: 3px; }
.thumb { width: 8px; height: 60%; border-radius: 4px 4px 0 0; background: #cacaca; }

.mid { display: flex; flex: none; flex-direction: column; gap: 4px; width: 374px; margin-left: 4px; }
.parts { flex: 288 1 0; }
.props { flex: 345 1 0; border-bottom: 0; }
.ptabs { display: flex; flex: none; height: 22px; border-bottom: 1px solid #c8c9cf; background: #efefef; }
.ptabs button {
  padding: 2px 8px 0;
  border-right: 1px solid #c8c9cf;
  background: #e1e1e2;
  color: #858585;
}
.ptabs .on { background: #f2f2f2; color: #222; }
.ptools {
  display: flex;
  flex: none;
  gap: 8px;
  height: 28px;
  padding: 3px 2px 0 6px;
  border-bottom: 1px solid #c8c9cf;
  background: #efefef;
}
.ptools button { gap: 3px; color: #333; }
.ptools button .caret { margin-left: 3px; }
.search {
  display: flex;
  flex: none;
  align-items: center;
  height: 20px;
  padding: 2px 7px 0 2px;
  border-bottom: 1px solid #bfc1c7;
}
.search input { flex: 1; min-width: 0; border: 0; padding: 0; outline: 0; }
.search input::placeholder { color: #808080; }
.ptree { padding: 3px 0 0 10px; }
.ptree li { display: flex; align-items: center; gap: 6px; height: 24px; }
.ptree .child { padding-left: 30px; }
.ptree .child span { padding: 2px 5px 3px 3px; background: #b3ccee; }

.sheet { display: flex; flex: 1; flex-direction: column; min-height: 0; padding-right: 1px; }
table { width: 100%; border-collapse: separate; border-spacing: 0; table-layout: fixed; }
.c-no { width: 22px; }
.c-name { width: 101px; }
.c-add { width: 41px; }
th, td {
  height: 21px;
  padding: 2px 2px 0 3px;
  border-right: 1px solid #d2d2d2;
  border-bottom: 1px solid #d2d2d2;
  font-weight: 400;
  line-height: 16px;
  text-align: left;
  white-space: nowrap;
  overflow: hidden;
}
th { padding: 2px 0 0; background: #efefef; color: #333; text-align: center; }
.key { color: #1a5cf0; }
.dim { background: #eaeaea; }
td.tick { padding: 0; }
.tick input {
  appearance: none;
  display: block;
  width: 14px;
  height: 14px;
  margin: 0 auto;
  border: 1px solid #808080;
  border-radius: 3px;
  background: #fff;
}
.fold { gap: 5px; }
.gutter { flex: 1; width: 22px; background: #efefef; }

.split { display: flex; flex: none; align-items: center; width: 4px; }
.split button { justify-content: flex-end; width: 4px; height: 100px; margin-top: 28px; background: #5f6c78; }

.canvas { flex: 1; min-width: 0; background: #000; overflow: hidden; }
.axis path { fill: none; stroke: #0a7d0a; }
.axis text { fill: #fff; font-size: 18px; text-anchor: middle; }
.dir { font: 15px "Liberation Sans", sans-serif; text-anchor: middle; }

.notes { position: absolute; top: 0; left: 0; pointer-events: none; }
.notes path { fill: #fb3b38; }
```
